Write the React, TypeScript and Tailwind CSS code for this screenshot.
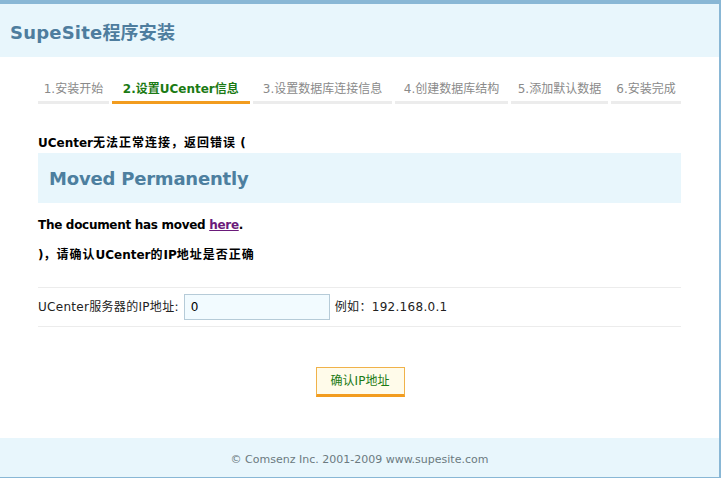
import React from "react";

const steps = [
  { label: "1.安装开始", w: "w-[72px]" },
  { label: "2.设置UCenter信息", w: "w-[140px]", active: true },
  { label: "3.设置数据库连接信息", w: "w-[142px]" },
  { label: "4.创建数据库结构", w: "w-[114px]" },
  { label: "5.添加默认数据", w: "w-[99px]" },
  { label: "6.安装完成", w: "w-[71px]" },
];

function C({ children }: { children: React.ReactNode }) {
  return <span className="tracking-[1px]">{children}</span>;
}

export default function App() {
  return (
    <div
      className="w-[721px] h-[480px] bg-white text-[12px] text-black"
      style={{ fontFamily: '"DejaVu Sans", Verdana, "Noto Sans CJK SC", sans-serif' }}
    >
      <div className="w-[721px] h-[478px] border-t-[4px] border-r-[2px] border-b-[1px] border-[#89b7d5] flex flex-col">
        <div className="h-[53px] bg-[#e8f6fc] flex items-center pl-[10px] pt-[4px]">
          <h1 className="text-[18px] font-bold text-[#4e7d9e] tracking-[0.2px]">SupeSite程序安装</h1>
        </div>
        <div className="flex-1 px-[38px] flex flex-col">
          <div className="flex gap-[3px] mt-[19px]">
            {steps.map((s) => (
              <div
                key={s.label}
                className={`${s.w} h-[28px] flex items-center justify-center border-b-[3px] ${
                  s.active ? "border-[#f29c1f] text-[#1b7a14] font-bold" : "border-[#ececec] text-[#8a8a8a]"
                }`}
              >
                {s.label}
              </div>
            ))}
          </div>
          <p className="mt-[31px] font-bold leading-[16px]">
            UCenter<C>无法正常连接，返回错误</C> (
          </p>
          <div className="mt-[2px] h-[50px] bg-[#e8f6fc] flex items-center pl-[11px]">
            <span className="text-[18px] font-bold text-[#4d7f9f] tracking-[-0.2px]">Moved Permanently</span>
          </div>
          <p className="mt-[14px] font-bold leading-[16px] tracking-[-0.3px]">
            The document has moved{" "}
            <a className="text-[#6a1a7a] underline" href="#">
              here
            </a>
            .
          </p>
          <p className="mt-[14px] font-bold leading-[16px]">
            )<C>，请确认</C>UCenter<C>的</C>IP<C>地址是否正确</C>
          </p>
          <div className="mt-[24px] border-t border-b border-[#ececec] h-[40px] flex items-center">
            <span className="text-[#222] tracking-[0.3px]">UCenter服务器的IP地址:</span>
            <input
              className="ml-[5px] w-[146px] h-[26px] border border-[#b6cbd8] bg-[#f2fbff] px-[6px] text-[12px] outline-none"
              defaultValue="0"
              style={{ fontFamily: '"DejaVu Sans", Verdana, sans-serif' }}
            />
            <span className="ml-[5px] text-[#222] tracking-[0.3px]">例如：192.168.0.1</span>
          </div>
          <div className="flex justify-center mt-[40px]">
            <button className="ml-[1px] w-[89px] h-[30px] bg-[#fffbea] border border-[#f0b24a] border-b-[3px] border-b-[#f29c1f] text-[#1b7a14] text-[12px]">
              确认IP地址
            </button>
          </div>
        </div>
        <div className="h-[39px] bg-[#e8f6fc] flex items-center justify-center pt-[6px] text-[11px] text-[#6b7a80]">
          © Comsenz Inc. 2001-2009 www.supesite.com
        </div>
      </div>
    </div>
  );
}
